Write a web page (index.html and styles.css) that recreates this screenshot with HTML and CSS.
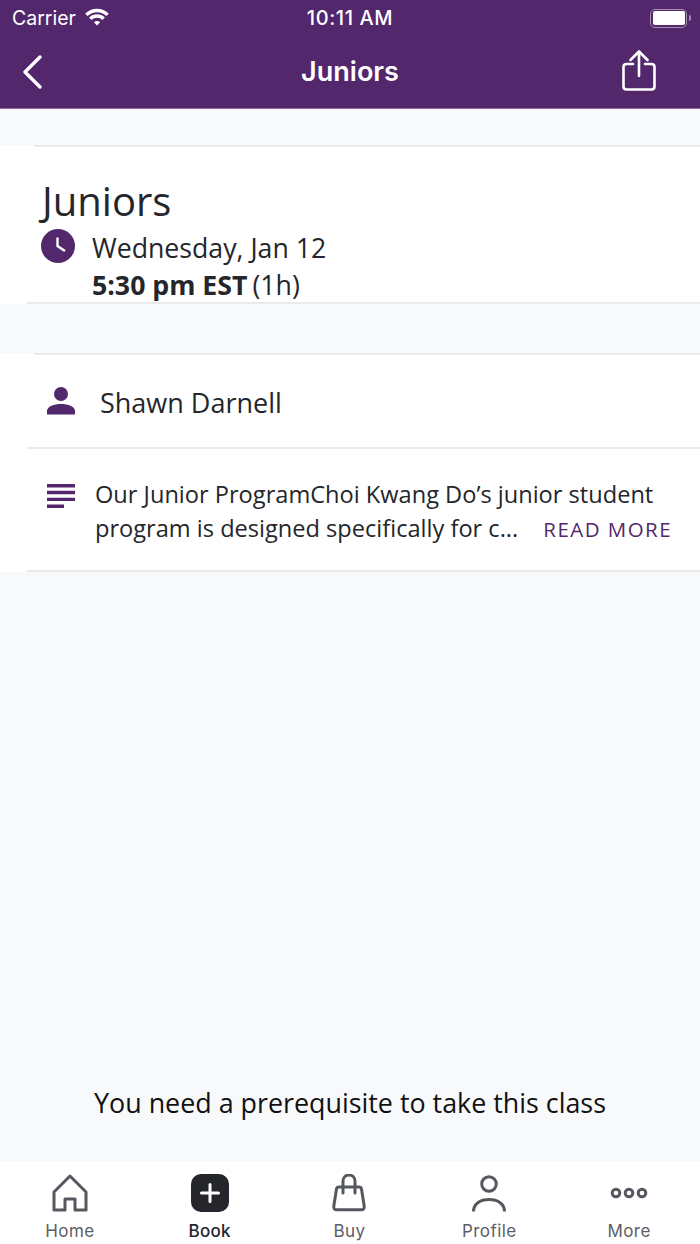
FILE: index.html
```html
<!DOCTYPE html>
<html lang="en">
<head>
  <meta charset="UTF-8" />
  <meta name="viewport" content="width=device-width, initial-scale=1" />
  <title>Juniors</title>
  <link rel="stylesheet" href="styles.css">
</head>
<body>
  <div class="app">
    <div class="header">
      <div class="status">
        <div class="status-left">
          <span>Carrier</span>
          <svg class="wifi" width="26" height="18" viewBox="0 0 26 18"><path d="M2.4 6.900A15 15 0 0 1 23.600 6.900M6.300 10.800A9.500 9.500 0 0 1 19.700 10.800" fill="none" stroke="#fff" stroke-width="3.400"/><path d="M13 17.500L9.800 14.300A4.500 4.500 0 0 1 16.200 14.300Z" fill="#fff"/></svg>
        </div>
        <div class="status-time">10:11 AM</div>
        <div class="status-right">
          <div class="battery"><div class="battery-fill"></div></div>
          <div class="battery-tip"></div>
        </div>
      </div>
      <div class="nav">
        <svg class="nav-back" width="22" height="34" viewBox="0 0 22 34"><path d="M19 2L4 17L19 32" fill="none" stroke="#fff" stroke-width="3.4" stroke-linecap="round" stroke-linejoin="round"/></svg>
        <div class="nav-title">Juniors</div>
        <svg class="nav-share" width="36" height="42" viewBox="0 0 36 42"><path d="M12 14H5.500C3.500 14 2.500 15 2.500 17V36.500C2.500 38.500 3.500 39.500 5.500 39.500H30.500C32.500 39.500 33.500 38.500 33.500 36.500V17C33.500 15 32.500 14 30.500 14H24" fill="none" stroke="#fff" stroke-width="2.6" stroke-linecap="round"/><path d="M18 26V2.500M9.500 10L18 1.500L26.500 10" fill="none" stroke="#fff" stroke-width="2.6" stroke-linecap="round" stroke-linejoin="round"/></svg>
      </div>
    </div>

    <div class="content">
      <!-- Class title and time -->
      <div class="card card-time">
        <h1>Juniors</h1>
        <div class="when">
          <svg class="clock" width="34" height="34" viewBox="0 0 34 34"><circle cx="17" cy="17" r="17" fill="#52276c"/><path d="M16.500 8.500V17L24 22" fill="none" stroke="#fff" stroke-width="2.4"/></svg>
          <div>
            <div class="date">Wednesday, Jan 12</div>
            <div class="time"><b>5:30 pm EST</b> <span>(1h)</span></div>
          </div>
        </div>
      </div>

      <!-- Instructor and description -->
      <div class="card card-info">
        <div class="row-person">
          <svg width="28" height="28" viewBox="0 0 28 28"><circle cx="14" cy="7" r="7" fill="#52276c"/><path d="M0 27.500V24C0 19.500 7 17 14 17S28 19.500 28 24V27.500Z" fill="#52276c"/></svg>
          <span>Shawn Darnell</span>
        </div>
        <div class="row-desc">
          <svg width="28" height="25" viewBox="0 0 28 25"><path d="M0 0H28V3.400H0Z M0 6.800H28V10.200H0Z M0 13.700H28V17.100H0Z M0 20.600H17V24H0Z" fill="#52276c"/></svg>
          <div class="desc-text">
            <div>Our Junior ProgramChoi Kwang Do’s junior student</div>
            <div class="desc-last"><span>program is designed specifically for c...</span><a class="more">READ MORE</a></div>
          </div>
        </div>
      </div>

      <div class="prereq">You need a prerequisite to take this class</div>
    </div>

    <div class="tabs">
      <div class="tab">
        <svg width="36" height="38" viewBox="0 0 36 38"><path d="M2 36V18L18 2L34 18V36H23V25H13V36Z" fill="none" stroke="#565860" stroke-width="3" stroke-linejoin="round"/></svg>
        <span>Home</span>
      </div>
      <div class="tab tab-active">
        <svg width="38" height="38" viewBox="0 0 38 38"><rect width="38" height="38" rx="10" fill="#24262b"/><path d="M19 10.500V27.500M10.500 19H27.500" stroke="#fff" stroke-width="3" stroke-linecap="round"/></svg>
        <span>Book</span>
      </div>
      <div class="tab">
        <svg width="36" height="38" viewBox="0 0 36 38"><path d="M8 13H28C29.500 13 30.300 14 30.500 15L33.200 32C33.600 34.500 32.300 35.800 30.500 35.800H5.500C3.700 35.800 2.400 34.500 2.800 32L5.500 15C5.700 14 6.500 13 8 13Z" fill="none" stroke="#565860" stroke-width="3"/><path d="M12 19V7C12 3.500 14.500 1 18 1S24 3.500 24 7V19" fill="none" stroke="#565860" stroke-width="3" stroke-linecap="round"/></svg>
        <span>Buy</span>
      </div>
      <div class="tab">
        <svg width="36" height="38" viewBox="0 0 36 38"><circle cx="18" cy="10" r="7.300" fill="none" stroke="#565860" stroke-width="3"/><path d="M2.500 37.500C2.500 30 9 25.500 18 25.500S33.500 30 33.500 37.500" fill="none" stroke="#565860" stroke-width="3"/></svg>
        <span>Profile</span>
      </div>
      <div class="tab">
        <svg width="38" height="38" viewBox="0 0 38 38"><circle cx="6" cy="19" r="3.8" fill="none" stroke="#565860" stroke-width="3"/><circle cx="19" cy="19" r="3.8" fill="none" stroke="#565860" stroke-width="3"/><circle cx="32" cy="19" r="3.8" fill="none" stroke="#565860" stroke-width="3"/></svg>
        <span>More</span>
      </div>
    </div>
  </div>
</body>
</html>
```

FILE: styles.css
```css
* { box-sizing: border-box; }
html, body { height: 100%; }
body {
  margin: 0;
  font-family: "Open Sans", sans-serif;
  background: #f8f9fb;
  color: #24262b;
}
.app {
  height: 1244px;
  display: flex;
  flex-direction: column;
  overflow: hidden;
}
.header {
  height: 109px;
  background: #52276c;
  border-bottom: 1px solid #8a6d9c;
  color: #fff;
  font-family: Inter, sans-serif;
}
.status {
  height: 36px;
  display: grid;
  grid-template-columns: 1fr auto 1fr;
  align-items: center;
  padding: 0 9px;
  font-size: 19.5px;
}
.status-left { display: flex; align-items: center; gap: 8px; margin-left: 3px; }
.wifi { margin-top: -3px; }
.status-time { font-size: 20px; font-weight: 500; letter-spacing: 0.6px; }
.status-right { display: flex; justify-content: flex-end; align-items: center; gap: 2px; }
.battery {
  width: 37px;
  height: 19px;
  border: 1.5px solid #a48fb3;
  border-radius: 5px;
  padding: 1.5px;
}
.battery-fill { height: 100%; background: #fff; border-radius: 2px; }
.battery-tip { width: 2px; height: 6px; background: #a48fb3; border-radius: 0 2px 2px 0; }
.nav {
  height: 72px;
  display: grid;
  grid-template-columns: 1fr auto 1fr;
  align-items: center;
  padding: 0 21px;
}
.nav-title {
  font-size: 27px;
  font-weight: 600;
  margin-top: -2px;
}
.nav-share { justify-self: end; margin: -2px 22px 0 0; }
.content { flex: 1; display: flex; flex-direction: column; padding-top: 36px; }
.card { background: #fff; position: relative; }
.card::before {
  content: "";
  display: block;
  height: 2px;
  margin-left: 34px;
  background: #e9eaeb;
}
.card-time {
  height: 159px;
  margin-bottom: 49px;
}
.card-time::after,
.row-person::after,
.row-desc::after {
  content: "";
  position: absolute;
  left: 27px;
  right: 0;
  bottom: 0;
  height: 2px;
  background: #e9eaeb;
}
h1 {
  margin: 0 0 0 42px;
  font-size: 40px;
  font-weight: 400;
  line-height: 54px;
  padding-top: 27px;
  height: 74px;
}
.when { display: flex; gap: 17px; padding-left: 41px; margin-top: 8px; }
.clock { flex: none; }
.date { font-size: 26.7px; line-height: 36px; margin-top: 1px; }
.time { font-size: 26.7px; line-height: 38px; }
.time b { font-weight: 700; }
.time span { margin-left: -2px; }
.row-person {
  position: relative;
  height: 94px;
  display: flex;
  align-items: center;
  padding-left: 47px;
  gap: 25px;
  font-size: 27px;
  padding-bottom: 2px;
}
.row-person span { margin-top: 2px; }
.row-desc {
  position: relative;
  height: 123px;
  display: flex;
  padding: 35px 0 0 47px;
  gap: 20px;
  font-size: 23.6px;
  line-height: 34px;
}
.row-desc svg { flex: none; }
.desc-text { flex: 1; margin-top: -7px; }
.desc-last { display: flex; justify-content: space-between; padding-right: 28px; }
.more { font-size: 20.5px; letter-spacing: 1.45px; color: #52276c; margin-top: 1px; }
.prereq {
  margin-top: auto;
  height: 77px;
  text-align: center;
  font-size: 26.85px;
  color: #111;
}
.tabs {
  height: 83px;
  background: #fff;
  display: grid;
  grid-template-columns: repeat(5, 1fr);
  font-family: Inter, sans-serif;
  padding: 13px 1px 0 0;
}
.tab {
  display: flex;
  flex-direction: column;
  align-items: center;
  gap: 9px;
  font-size: 17px;
  letter-spacing: 0.45px;
  line-height: 20px;
  color: #5c5e66;
}
.tab-active { color: #24262b; font-weight: 500; letter-spacing: 0.3px; }
```
